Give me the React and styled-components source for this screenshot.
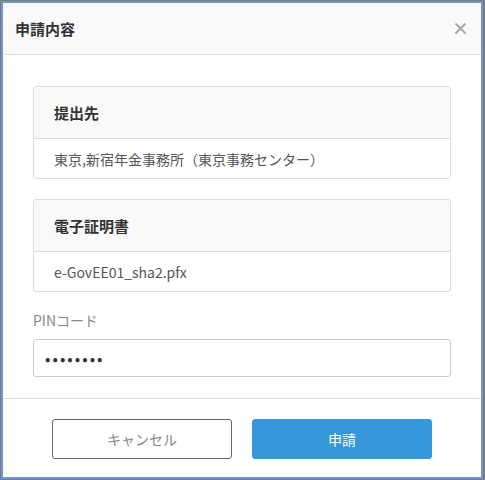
import React from 'react';
import styled, { createGlobalStyle } from 'styled-components';

const GlobalStyle = createGlobalStyle`
  html, body {
    margin: 0;
    padding: 0;
    background: #7a7a7a;
    font-family: "Noto Sans CJK JP", "Noto Sans", "Liberation Sans", sans-serif;
  }
  * {
    box-sizing: border-box;
  }
`;

const CloseIcon = () => (
  <svg width="13" height="13" viewBox="0 0 13 13">
    <path d="M1.5 1.5L11.5 11.5M11.5 1.5L1.5 11.5" stroke="#a8a8a8" strokeWidth="2" />
  </svg>
);

const InfoCard = ({ title, children }) => (
  <Card>
    <CardHead>{title}</CardHead>
    <CardBody>{children}</CardBody>
  </Card>
);

const App = () => {
  return (
    <>
      <GlobalStyle />
      <Modal>
        <Header>
          <Title>申請内容</Title>
          <CloseButton type="button" aria-label="close">
            <CloseIcon />
          </CloseButton>
        </Header>
        <Content>
          <InfoCard title="提出先">東京,新宿年金事務所（東京事務センター）</InfoCard>
          <InfoCard title="電子証明書">e-GovEE01_sha2.pfx</InfoCard>
          <Label htmlFor="pin">PINコード</Label>
          <PinInput id="pin" type="password" value="12345678" readOnly />
        </Content>
        <Footer>
          <Button>キャンセル</Button>
          <Button primary>申請</Button>
        </Footer>
      </Modal>
    </>
  );
};

const Modal = styled.div`
  margin: 1px 2px 1px 1px;
  height: 478px;
  border: 2px solid #6f94d8;
  background: #fff;
  display: flex;
  flex-direction: column;
`;

const Header = styled.div`
  display: flex;
  align-items: center;
  justify-content: space-between;
  height: 52px;
  padding: 0 14px 0 12px;
  background: #f9f9f9;
  border-bottom: 1px solid #dddddd;
`;

const Title = styled.h1`
  margin: 0;
  font-size: 15px;
  font-weight: 700;
  color: #333;
`;

const CloseButton = styled.button`
  border: 0;
  background: transparent;
  padding: 0;
  display: flex;
  cursor: pointer;
`;

const Content = styled.div`
  flex: 1;
  display: flex;
  flex-direction: column;
  padding: 31px 30px 20px;
`;

const Card = styled.div`
  border: 1px solid #dddddd;
  border-radius: 3px;
  margin-bottom: 20px;
  &:last-of-type {
    margin-bottom: 0;
  }
`;

const CardHead = styled.div`
  display: flex;
  align-items: center;
  height: 52px;
  padding: 0 20px;
  background: #f9f9f9;
  border-bottom: 1px solid #dddddd;
  border-radius: 3px 3px 0 0;
  font-size: 15px;
  font-weight: 700;
  color: #333;
`;

const CardBody = styled.div`
  display: flex;
  align-items: center;
  height: 39px;
  padding: 0 20px;
  font-size: 14px;
  color: #555;
`;

const Label = styled.label`
  margin-top: 18px;
  line-height: 20px;
  font-size: 14px;
  color: #888;
`;

const PinInput = styled.input`
  margin-top: 9px;
  height: 38px;
  padding: 0 11px;
  border: 1px solid #cccccc;
  border-radius: 3px;
  font-family: inherit;
  font-size: 16px;
  color: #333;
  letter-spacing: 2px;
  outline: none;
`;

const Footer = styled.div`
  display: flex;
  justify-content: center;
  gap: 20px;
  padding: 20px 0 18px;
  border-top: 1px solid #dddddd;
`;

const Button = styled.button`
  width: 180px;
  height: 40px;
  border-radius: 3px;
  font-family: inherit;
  font-size: 14px;
  cursor: pointer;
  border: 1px solid ${({ primary }) => (primary ? '#3498db' : '#666')};
  background: ${({ primary }) => (primary ? '#3498db' : '#fff')};
  color: ${({ primary }) => (primary ? '#fff' : '#888')};
`;

export default App;
